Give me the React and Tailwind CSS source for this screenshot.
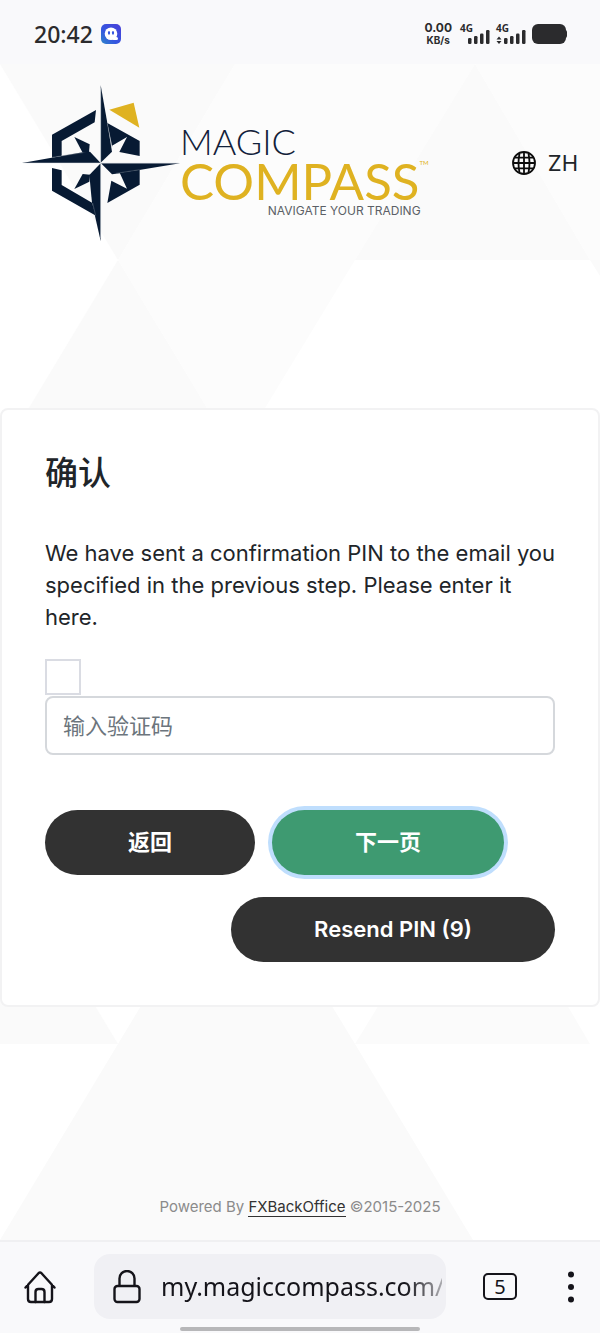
import React, { useState } from 'react';

const BACKDROP = [
  { points: '0,0 235,0 118,196', fill: '#fafafa' },
  { points: '235,0 475,0 355,196 118,196', fill: '#fcfcfc' },
  { points: '475,0 355,196 590,196', fill: '#fafafa' },
  { points: '475,0 600,0 600,196 590,196', fill: '#fcfcfc' },
  { points: '118,196 236,392 0,392', fill: '#fafafa' },
  { points: '118,196 355,196 236,392', fill: '#fcfcfc' },
  { points: '590,196 600,196 600,212', fill: '#fafafa' },
  { points: '0,784 0,980 118,980', fill: '#fafafa' },
  { points: '236,784 118,980 355,980', fill: '#fafafa' },
  { points: '475,784 355,980 590,980', fill: '#fbfbfb' },
  { points: '118,980 355,980 473,1176 0,1176', fill: '#fafafa' },
];

const Backdrop = () => (
  <svg
    className="absolute inset-0 -z-10 h-full w-full"
    viewBox="0 0 600 1176"
    preserveAspectRatio="xMidYMin slice"
    aria-hidden="true"
  >
    {BACKDROP.map((shape) => (
      <polygon key={shape.points} points={shape.points} fill={shape.fill} />
    ))}
  </svg>
);

const AppBadge = () => (
  <svg width="20" height="20" viewBox="0 0 20 20" aria-hidden="true">
    <defs>
      <linearGradient id="badge" x1="0" y1="1" x2="1" y2="0">
        <stop offset="0" stopColor="#2f86c9" />
        <stop offset="0.4" stopColor="#3557e0" />
        <stop offset="1" stopColor="#4a3fd8" />
      </linearGradient>
    </defs>
    <rect width="20" height="20" rx="5" fill="url(#badge)" />
    <circle cx="10" cy="9.7" r="6.3" fill="#fff" />
    <path d="M13 14.5h2.5" stroke="#fff" strokeWidth="3" strokeLinecap="round" />
    <ellipse cx="8" cy="8.8" rx="1.1" ry="1.9" fill="#3557e0" />
    <ellipse cx="12" cy="8.8" rx="1.1" ry="1.9" fill="#3557e0" />
  </svg>
);

const Signal = ({ arrows }) => (
  <div className="flex w-8 flex-col">
    <span className="text-[10px] leading-[9px] font-bold">4G</span>
    <svg className="-mt-1" width="32" height="15" viewBox="0 0 32 15" fill="#2b2b2d" aria-hidden="true">
      {arrows && <path d="M0.5 10.5 3 7.5l2.5 3zM0.5 12 3 15l2.5-3z" />}
      <rect x="8" y="9" width="3.5" height="6" rx="1.2" />
      <rect x="14" y="7" width="3.5" height="8" rx="1.2" />
      <rect x="20" y="4.5" width="3.5" height="10.5" rx="1.2" />
      <rect x="26" y="1" width="3.5" height="14" rx="1.2" />
    </svg>
  </div>
);

const StatusBar = () => (
  <div className="flex h-16 items-center justify-between bg-[#f9f9fb] pt-1 pr-8 pl-[34px] font-['Noto_Sans',sans-serif] text-[#2b2b2d]">
    <div className="flex items-center gap-2">
      <span className="text-[23px] leading-6 font-medium">20:42</span>
      <AppBadge />
    </div>
    <div className="flex items-center gap-1">
      <div className="mr-1 flex flex-col items-center font-['Inter',sans-serif] font-bold">
        <span className="text-[12px] leading-3">0.00</span>
        <span className="text-[10px] leading-3">KB/s</span>
      </div>
      <Signal />
      <Signal arrows />
      <svg width="36" height="20" viewBox="0 0 36 20" fill="#2b2b2d" aria-hidden="true">
        <rect width="34" height="20" rx="6" />
        <rect x="30" y="6" width="5" height="8" rx="2" />
      </svg>
    </div>
  </div>
);

const CompassMark = () => (
  <svg className="shrink-0" width="158" height="156" viewBox="36 30 474 468" aria-hidden="true">
    <g fill="#071a33">
      <path d="M258 105 254 142 155 198V242L126 248V179Z" />
      <path d="M126 279 155 286V330L246 383 258 422 126 347Z" />
      <path d="M292 144 389 198V243L328 231 351 186 306 212Z" />
      <path d="M389 284V329L292 384 304 317 351 341 329 293Z" />
      <path d="M193 186 239 208 237 232 218 233Z" />
      <path d="M218 297 240 299 238 320 193 342Z" />
      <path d="M272 30 292 144 306 230 272 263Z" />
      <path d="M36 264 218 232 240 230 272 264Z" />
      <path d="M272 498 246 383 238 300 272 265Z" />
      <path d="M510 265 329 295 306 298 273 265Z" />
    </g>
    <path d="M292 146 306 216M126 247 220 233M248 384 257 422M389 284 318 295" stroke="#7b8593" strokeWidth="1.2" />
    <path d="M272 40V490M40 264H506" stroke="#dfe2e6" strokeWidth="1.5" />
    <path d="M298 104 371 83 388 158Z" fill="#dfb221" />
  </svg>
);

const Logo = () => (
  <a href="#home" aria-label="Magic Compass" className="flex items-center font-['Lato',sans-serif]">
    <CompassMark />
    <span className="flex flex-col pt-4">
      <span className="text-[36px] leading-8 font-light text-[#12213a]">MAGIC</span>
      <span className="flex items-start text-[#dfb221]">
        <span className="text-[51px] leading-12">COMPASS</span>
        <span className="text-[6px] leading-3">TM</span>
      </span>
      <span className="self-end pr-2 font-['Inter',sans-serif] text-[12px] leading-3 text-[#5b5f66]">
        NAVIGATE YOUR TRADING
      </span>
    </span>
  </a>
);

const GlobeIcon = () => (
  <svg width="24" height="24" viewBox="0 0 24 24" fill="none" stroke="#0c0c0c" strokeWidth="1.8" aria-hidden="true">
    <circle cx="12" cy="12" r="11" />
    <path d="M12 1v22M1 12h22M3 6.7h18M3 17.3h18M7.5 2.5Q5.500 12 7.500 21.500M16.500 2.500Q18.500 12 16.500 21.500" />
  </svg>
);

const PinCard = () => {
  const [pin, setPin] = useState('');

  return (
    <form
      onSubmit={(e) => e.preventDefault()}
      className="mt-[167px] rounded-lg border-2 border-[#f2f2f3] bg-white p-[43px] text-[22px] text-[#212529]"
    >
      <h1 className="text-[33px] leading-10 font-medium">确认</h1>
      <p className="mt-11 -mr-3 leading-8">
        We have sent a confirmation PIN to the email you specified in the previous step. Please enter it here.
      </p>
      <input
        type="checkbox"
        aria-label="验证"
        className="mt-[26px] block size-9 appearance-none border-2 border-[#dadce3]"
      />
      <input
        type="text"
        value={pin}
        onChange={(e) => setPin(e.target.value)}
        placeholder="输入验证码"
        aria-label="输入验证码"
        className="mt-px block h-[59px] w-full rounded-lg border-2 border-[#d5d8dc] px-4 placeholder:text-[#6c757d]"
      />
      <div className="mt-[55px] flex flex-wrap gap-x-[17px] gap-y-[22px] font-semibold text-white">
        <button type="button" className="h-[65px] rounded-full bg-[#323232] px-[83px]">返回</button>
        <button type="submit" className="h-[65px] rounded-full bg-[#3e9a71] px-[83px] ring-4 ring-[#bfdefd]">下一页</button>
        <button type="button" className="ml-auto h-[65px] rounded-full bg-[#323232] px-[83px]">Resend PIN (9)</button>
      </div>
    </form>
  );
};

const BrowserBar = () => (
  <div className="flex flex-col items-center border-t-2 border-[#f0f0f2] bg-[#f9f9fb] pt-3 pb-0.5 font-['Noto_Sans',sans-serif] text-[#15141a]">
    <div className="flex w-full items-center pr-5 pl-6">
      <button type="button" aria-label="Home">
        <svg width="32" height="34" viewBox="0 0 32 34" fill="none" stroke="#15141a" strokeWidth="2.4" strokeLinecap="round" strokeLinejoin="round">
          <path d="M1.500 17.500 14.500 3.200Q16 1.800 17.500 3.200L30.500 17.500M4 15V29Q4 32 7 32H25Q28 32 28 29V15" />
          <path d="M11.500 32V22Q11.500 19 14.500 19H17.500Q20.500 19 20.500 22V32" />
        </svg>
      </button>
      <div className="ml-[38px] flex h-[65px] min-w-0 flex-1 items-center gap-5 rounded-2xl bg-[#f0f0f4] pr-1 pl-[19px]">
        <svg className="shrink-0" width="28" height="34" viewBox="0 0 28 34" fill="none" stroke="#15141a" strokeWidth="2.4" aria-hidden="true">
          <rect x="1.500" y="16" width="25" height="16" rx="3" />
          <path d="M6.500 16V8.500a7.500 7.500 0 0 1 15 0V16" />
        </svg>
        <input
          type="text"
          readOnly
          value="my.magiccompass.com/"
          aria-label="Address"
          className="w-full min-w-0 bg-transparent mask-[linear-gradient(to_right,#000_87%,transparent_106%)] text-[25px]"
        />
      </div>
      <button
        type="button"
        aria-label="Tabs"
        className="ml-[37px] flex h-[27px] w-[34px] items-center justify-center rounded-[5px] border-2 border-[#15141a] text-[20px]"
      >
        5
      </button>
      <button type="button" aria-label="Menu" className="ml-[45px]">
        <svg width="18" height="32" viewBox="0 0 18 32" fill="#15141a">
          <circle cx="9" cy="3.500" r="3" />
          <circle cx="9" cy="16" r="3" />
          <circle cx="9" cy="28.500" r="3" />
        </svg>
      </button>
    </div>
    <div className="mt-2 h-1 w-2/5 rounded-full bg-[#b7b7b9]" />
  </div>
);

const App = () => (
  <div className="flex min-h-screen flex-col bg-white font-['Inter','Noto_Sans_CJK_SC',sans-serif]">
    <StatusBar />
    <main className="relative isolate flex flex-1 flex-col overflow-hidden">
      <Backdrop />
      <header className="flex items-center justify-between px-[22px] pt-[21px]">
        <Logo />
        <button type="button" className="flex items-center gap-3 text-[22px] text-[#212529]">
          <GlobeIcon />
          ZH
        </button>
      </header>
      <PinCard />
      <footer className="mt-auto pb-[21px] text-center text-[15px] leading-6 text-[#8b8b8b]">
        Powered By{' '}
        <a href="#fxbackoffice" className="border-b border-[#323232] text-[#323232]">FXBackOffice</a>
        {' '}©2015-2025
      </footer>
    </main>
    <BrowserBar />
  </div>
);

export default App;
